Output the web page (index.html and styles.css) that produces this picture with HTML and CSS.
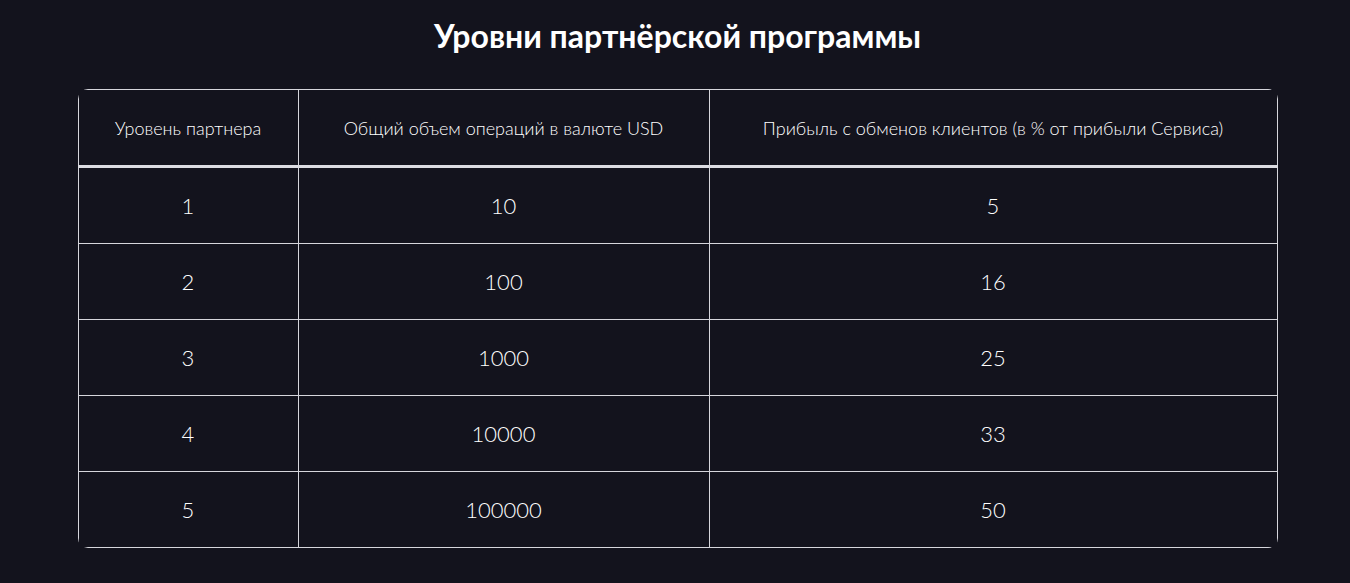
FILE: index.html
```html
<!DOCTYPE html>
<html lang="ru">
<head>
<meta charset="utf-8">
<title>Уровни партнёрской программы</title>
<link rel="stylesheet" href="styles.css">
</head>
<body>
<main class="page">
  <h1 class="title">Уровни партнёрской программы</h1>
  <div class="table-wrap">
    <table class="levels">
      <thead>
        <tr>
          <th class="c1">Уровень партнера</th>
          <th class="c2">Общий объем операций в валюте USD</th>
          <th class="c3">Прибыль с обменов клиентов (в % от прибыли Сервиса)</th>
        </tr>
      </thead>
      <tbody>
        <tr><td>1</td><td>10</td><td>5</td></tr>
        <tr><td>2</td><td>100</td><td>16</td></tr>
        <tr><td>3</td><td>1000</td><td>25</td></tr>
        <tr><td>4</td><td>10000</td><td>33</td></tr>
        <tr><td>5</td><td>100000</td><td>50</td></tr>
      </tbody>
    </table>
  </div>
</main>
</body>
</html>
```
FILE: styles.css
```css
html, body {
  margin: 0;
  padding: 0;
  background: #13131d;
}
body {
  padding-left: 5px;
  color: #ffffff;
  font-family: "Lato", "Noto Sans", sans-serif;
}
.page {
  display: flex;
  flex-direction: column;
  align-items: center;
  padding-top: 16px;
}
.title {
  margin: 0 0 33px;
  font-size: 32px;
  font-weight: 700;
  line-height: 40px;
  color: #ffffff;
}
.table-wrap {
  width: 1200px;
  border-radius: 10px;
  overflow: hidden;
}
.levels {
  width: 100%;
  border-collapse: collapse;
  table-layout: fixed;
}
.levels th,
.levels td {
  border: 1px solid #d6d6dc;
  text-align: center;
  padding: 0;
  color: #ffffff;
}
.levels th {
  height: 75px;
  font-size: 18px;
  font-weight: 300;
  border-bottom: 3px solid #dcdce2;
}
.levels td {
  height: 75px;
  font-size: 22px;
  font-weight: 300;
}
.c1 { width: 219px; }
.c2 { width: 410px; }
.c3 { width: auto; }
```
